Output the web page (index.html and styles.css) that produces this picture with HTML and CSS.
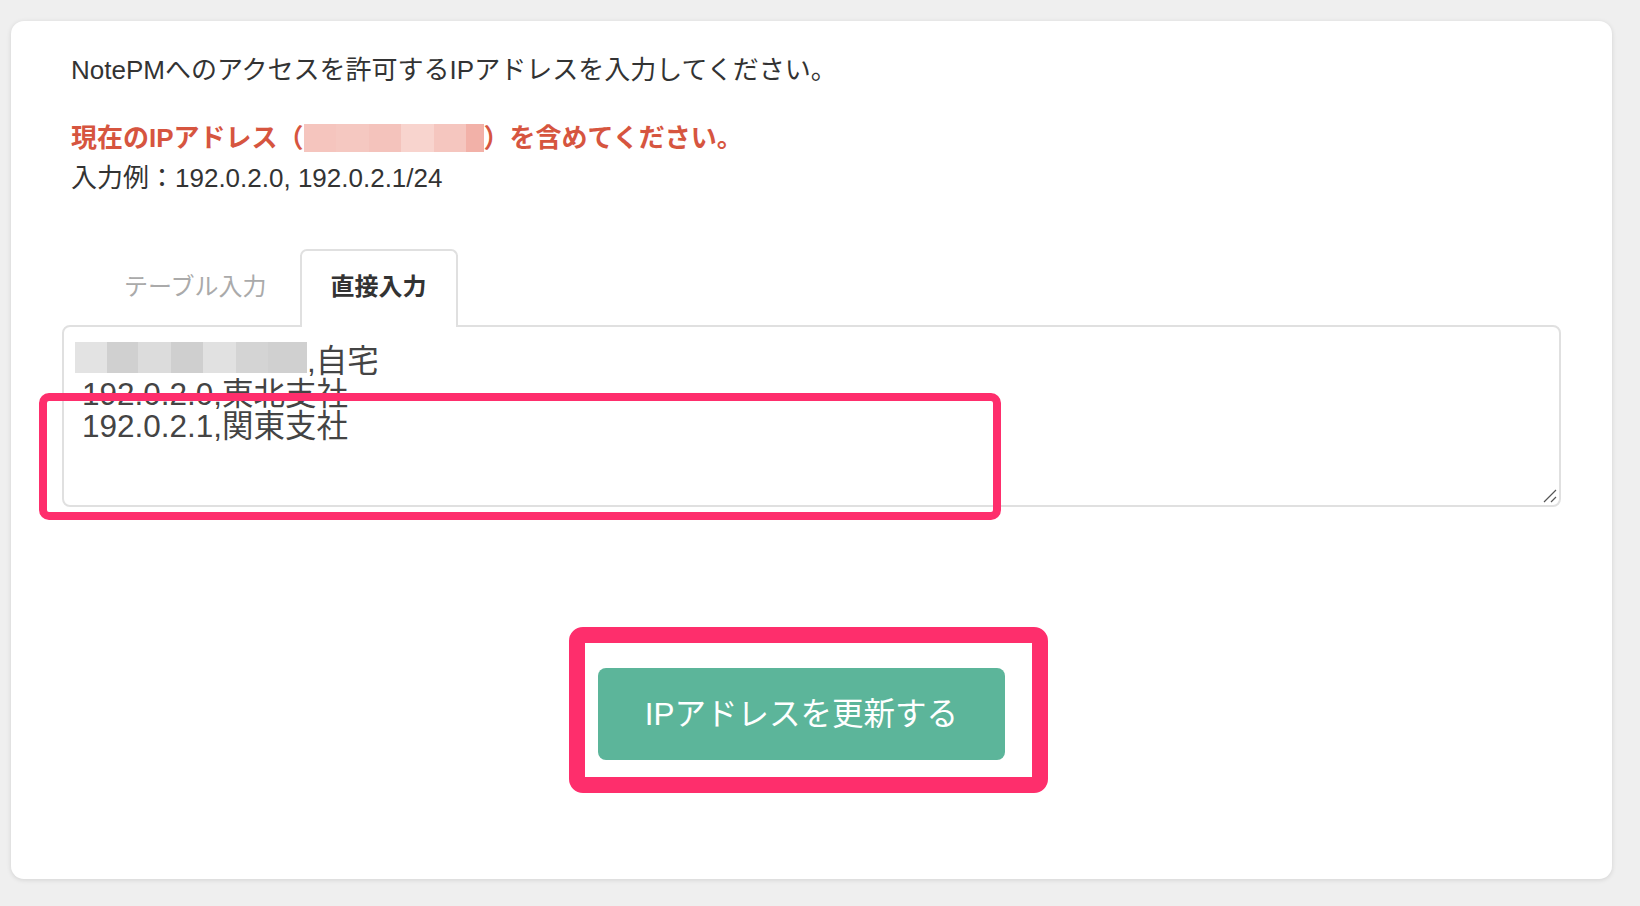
FILE: index.html
```html
<!DOCTYPE html>
<html lang="ja">
<head>
<meta charset="utf-8">
<title>IPアドレス制限</title>
<link rel="stylesheet" href="styles.css">
</head>
<body>
<div class="card">
  <div class="intro">
    <p class="lead">NotePMへのアクセスを許可するIPアドレスを入力してください。</p>
    <p class="warn">現在のIPアドレス（<span class="blur-red"><i class="r1"></i><i class="r2"></i><i class="r3"></i><i class="r4"></i><i class="r5"></i><i class="r6"></i></span>）を含めてください。</p>
    <p class="example">入力例：192.0.2.0, 192.0.2.1/24</p>
  </div>

  <div class="tabs">
    <div class="tab">テーブル入力</div>
    <div class="tab active">直接入力</div>
  </div>

  <div class="editor">
    <div class="line"><span class="blur-gray"><i class="g1"></i><i class="g2"></i><i class="g3"></i><i class="g4"></i><i class="g5"></i><i class="g6"></i><i class="g7"></i></span>,自宅</div>
    <div class="line">192.0.2.0,東北支社</div>
    <div class="line">192.0.2.1,関東支社</div>
    <svg class="grip" width="14" height="14" viewBox="0 0 14 14"><path d="M1 13 L13 1 M8 13 L13 8" stroke="#555" stroke-width="1.2" fill="none"/></svg>
    <span class="annot annot-editor"></span>
  </div>

  <div class="actions">
    <div class="btn-wrap">
      <button class="btn">IPアドレスを更新する</button>
      <span class="annot annot-btn"></span>
    </div>
  </div>
</div>
</body>
</html>
```

FILE: styles.css
```css
html, body {
  margin: 0;
  padding: 0;
}
body {
  background: #efefef;
  padding: 21px 0 0 11px;
  height: 906px;
  box-sizing: border-box;
  overflow: hidden;
  font-family: "Liberation Sans", "Noto Sans CJK JP", sans-serif;
  color: #333;
}
.card {
  width: 1601px;
  box-sizing: border-box;
  background: #fff;
  border-radius: 13px;
  box-shadow: 0 1px 5px rgba(0, 0, 0, 0.12);
  padding: 29px 51px 119px 51px;
}
.intro {
  padding-left: 9px;
  margin-bottom: 51px;
  font-size: 26px;
  line-height: 40px;
}
.intro p {
  margin: 0;
}
.lead {
  margin-bottom: 28px !important;
}
.warn {
  color: #d6553f;
  font-weight: bold;
}
.blur-red {
  display: inline-flex;
  height: 28px;
  vertical-align: -5px;
}
.blur-red i {
  display: block;
  height: 28px;
}
.r1 { width: 32px; background: #f5c5be; }
.r2 { width: 33px; background: #f5c8c1; }
.r3 { width: 32px; background: #f4c3bc; }
.r4 { width: 33px; background: #f8d4ce; }
.r5 { width: 32px; background: #f5c6bf; }
.r6 { width: 18px; background: #f2b1a8; }

.tabs {
  display: flex;
  align-items: flex-end;
  padding-left: 31px;
  margin-bottom: -2px;
  position: relative;
  z-index: 1;
}
.tab {
  font-size: 24px;
  line-height: 72px;
  padding: 0 29px 4px;
  border: 2px solid transparent;
  border-bottom: none;
  margin-right: 2px;
  color: #aaa;
}
.tab.active {
  color: #333;
  font-weight: bold;
  background: #fff;
  border-color: #e0e0e0;
  border-radius: 7px 7px 0 0;
}

.editor {
  position: relative;
  height: 182px;
  box-sizing: border-box;
  border: 2px solid #e0e0e0;
  border-radius: 8px;
  padding: 18px 18px 17px;
  font-size: 31.5px;
  line-height: 32.5px;
  color: #444;
  margin-bottom: 161px;
}
.blur-gray {
  display: inline-flex;
  height: 31px;
  margin-left: -7px;
  vertical-align: top;
  margin-top: -3px;
}
.blur-gray i {
  display: block;
  height: 31px;
}
.g1 { width: 32px; background: #e3e3e3; }
.g2 { width: 31px; background: #d0d0d0; }
.g3 { width: 33px; background: #dcdcdc; }
.g4 { width: 32px; background: #cfcfcf; }
.g5 { width: 33px; background: #e1e1e1; }
.g6 { width: 32px; background: #d4d4d4; }
.g7 { width: 39px; background: #d0d0d0; }
.grip {
  position: absolute;
  right: 2px;
  bottom: 2px;
}

.actions {
  display: flex;
  justify-content: center;
  padding-right: 20px;
}
.btn-wrap {
  position: relative;
}
.btn {
  display: block;
  box-sizing: border-box;
  width: 407px;
  height: 92px;
  border: none;
  border-radius: 8px;
  background: #5cb59a;
  color: #fff;
  font-family: "Liberation Sans", "Noto Sans CJK JP", sans-serif;
  font-size: 31.5px;
  padding: 0 0 6px;
}

.annot {
  position: absolute;
  box-sizing: border-box;
  border-style: solid;
  border-color: #fe2e6c;
  pointer-events: none;
}
.annot-editor {
  left: -25px;
  top: 66px;
  width: 962px;
  height: 127px;
  border-width: 8px;
  border-radius: 10px;
}
.annot-btn {
  left: -29px;
  top: -41px;
  width: 479px;
  height: 166px;
  border-width: 16px;
  border-radius: 14px;
}
```
